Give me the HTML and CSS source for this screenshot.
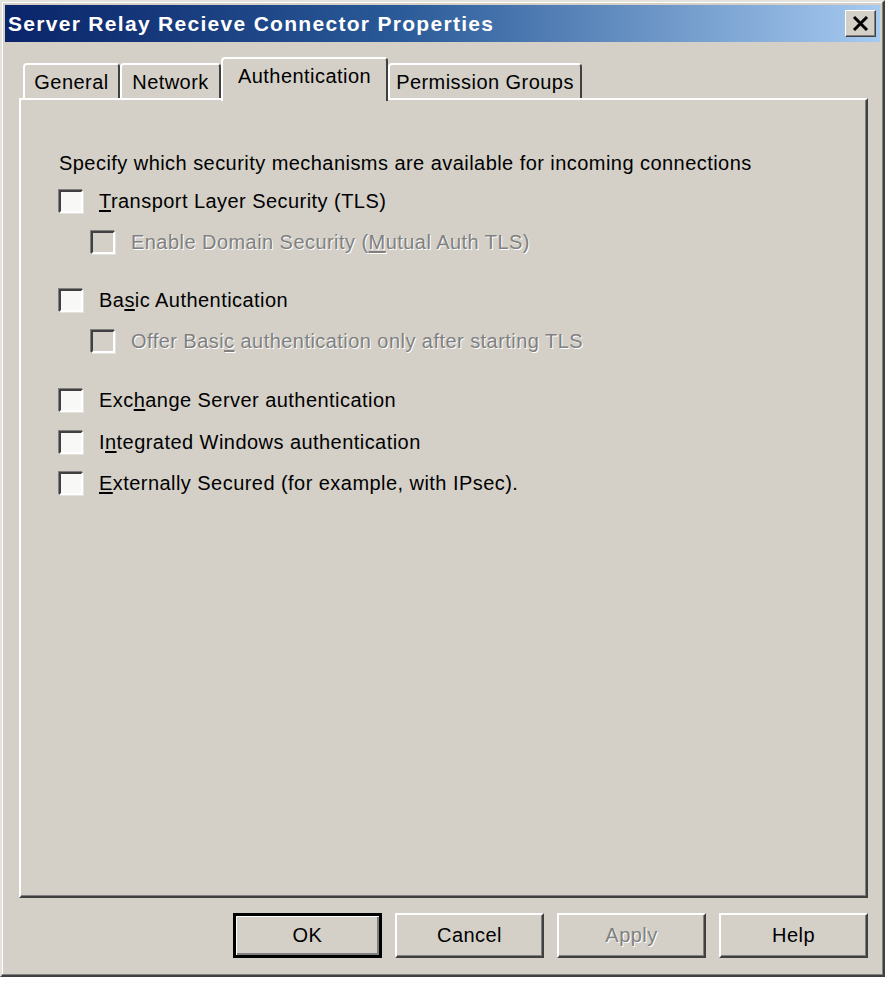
FILE: index.html
```html
<!DOCTYPE html>
<html>
<head>
<meta charset="utf-8">
<title>Server Relay Recieve Connector Properties</title>
<link rel="stylesheet" href="styles.css">
</head>
<body>
<div class="window">
  <div class="titlebar">
    <span class="title">Server Relay Recieve Connector Properties</span>
    <span class="close">
      <svg width="17" height="15" viewBox="0 0 17 15"><path d="M2 1 L15 14 M15 1 L2 14" stroke="#000" stroke-width="3" fill="none"/></svg>
    </span>
  </div>
  <div class="client">
    <div class="tabs">
      <div class="tab t-general">General</div>
      <div class="tab t-network">Network</div>
      <div class="tab t-auth selected">Authentication</div>
      <div class="tab t-perm">Permission Groups</div>
    </div>
    <div class="panel">
      <div class="heading">Specify which security mechanisms are available for incoming connections</div>
      <div class="group">
        <div class="row"><span class="cb"></span><span class="label"><u>T</u>ransport Layer Security (TLS)</span></div>
        <div class="row sub disabled"><span class="cb"></span><span class="label">Enable Domain Security (<u>M</u>utual Auth TLS)</span></div>
      </div>
      <div class="group g2">
        <div class="row"><span class="cb"></span><span class="label">Ba<u>s</u>ic Authentication</span></div>
        <div class="row sub disabled"><span class="cb"></span><span class="label">Offer Basi<u>c</u> authentication only after starting TLS</span></div>
      </div>
      <div class="group g3">
        <div class="row r3"><span class="cb"></span><span class="label">Exc<u>h</u>ange Server authentication</span></div>
        <div class="row r3"><span class="cb"></span><span class="label">I<u>n</u>tegrated Windows authentication</span></div>
        <div class="row r3"><span class="cb"></span><span class="label"><u>E</u>xternally Secured (for example, with IPsec).</span></div>
      </div>
    </div>
    <div class="buttons">
      <div class="btn default">OK</div>
      <div class="btn">Cancel</div>
      <div class="btn disabled">Apply</div>
      <div class="btn">Help</div>
    </div>
  </div>
</div>
</body>
</html>
```
FILE: styles.css
```css
html, body {
  margin: 0;
  padding: 0;
  background: #ffffff;
}
body {
  font-family: "Liberation Sans", Arial, sans-serif;
  font-size: 20px;
  letter-spacing: 0.45px;
  color: #000;
}
.window {
  width: 885px;
  box-sizing: border-box;
  background: #d4d0c8;
  border: 2px solid;
  border-color: #e4e2dc #404040 #404040 #e4e2dc;
  box-shadow: inset -1px -1px 0 #808080, inset 1px 1px 0 #ffffff;
  padding: 3px 3px 17px 3px;
}
.titlebar {
  height: 37px;
  display: flex;
  align-items: center;
  justify-content: space-between;
  padding: 0 4px 0 3px;
  background: linear-gradient(to right, #0a246a 0%, #2a5a98 45%, #a6caf0 100%);
}
.title {
  color: #fff;
  font-weight: bold;
  font-size: 21px;
  letter-spacing: 1.3px;
}
.close {
  width: 31px;
  height: 27px;
  box-sizing: border-box;
  background: #d4d0c8;
  border: 1px solid;
  border-color: #fff #404040 #404040 #fff;
  box-shadow: inset -1px -1px 0 #808080;
  display: flex;
  align-items: center;
  justify-content: center;
}
.client {
  padding: 15px 12px 0 14px;
}
.tabs {
  display: flex;
  align-items: flex-end;
  height: 41px;
  padding-left: 4px;
  position: relative;
  z-index: 1;
}
.tab {
  box-sizing: border-box;
  height: 35px;
  border: 2px solid;
  border-bottom: none;
  border-color: #ffffff #404040 transparent #ffffff;
  border-radius: 4px 4px 0 0;
  background: #d4d0c8;
  display: flex;
  align-items: center;
  justify-content: center;
  padding-top: 1px;
}
.t-general { width: 97px; }
.t-network { width: 101px; }
.t-auth { width: 167px; }
.t-perm { width: 194px; }
.tab.selected {
  height: 44px;
  margin-bottom: -3px;
  padding-bottom: 8px;
}
.panel {
  box-sizing: border-box;
  height: 800px;
  border: 2px solid;
  border-color: #ffffff #404040 #404040 #ffffff;
  box-shadow: inset -1px -1px 0 #808080;
  padding: 48px 0 0 38px;
}
.heading {
  height: 33px;
  line-height: 30px;
}
.row {
  height: 41px;
  display: flex;
  align-items: center;
}
.row.r3 { height: 41.5px; }
.g2 { margin-top: 17px; }
.g3 { margin-top: 18px; }
.cb {
  width: 24px;
  height: 23px;
  box-sizing: border-box;
  background: #f8f8f6;
  border: 2px solid;
  border-color: #404040 #ffffff #ffffff #404040;
  box-shadow: -1px -1px 0 #808080, 1px 1px 0 #e4e2dc;
  margin-right: 16px;
  flex: none;
}
.row.sub { padding-left: 32px; }
.disabled .cb { background: #d4d0c8; }
.disabled .label, .btn.disabled {
  color: #808080;
  text-shadow: 1px 1px 0 #ffffff;
}
u {
  text-decoration: underline;
  text-underline-offset: 2px;
}
.buttons {
  display: flex;
  justify-content: flex-end;
  gap: 13px;
  margin-top: 15px;
}
.btn {
  width: 149px;
  height: 45px;
  box-sizing: border-box;
  border: 2px solid;
  border-color: #ffffff #404040 #404040 #ffffff;
  box-shadow: inset -1px -1px 0 #808080;
  display: flex;
  align-items: center;
  justify-content: center;
}
.btn.default {
  border: 3px solid #000;
  box-shadow: inset 1px 1px 0 #ffffff, inset -2px -2px 0 #808080;
}
```
